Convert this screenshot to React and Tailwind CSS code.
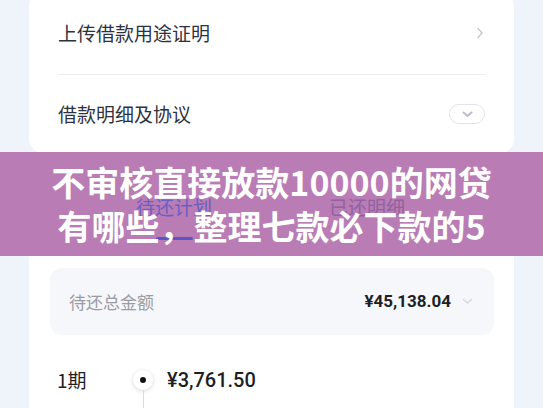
import React from "react";

const cjk = { fontFamily: '"Noto Sans CJK SC", "Noto Sans", sans-serif' };
const num = { fontFamily: 'Roboto, "Noto Sans", sans-serif' };

export default function App() {
  return (
    <div className="relative isolate w-[543px] h-[408px] overflow-hidden bg-[#eff3fa]" style={cjk}>
      <div className="flex flex-col px-[29px]">
        {/* Card 1 */}
        <div className="-mt-[8px] bg-white rounded-[14px] px-[29px]">
          <div className="h-[82px] flex items-center justify-between">
            <span className="text-[19px] text-[#2e3240]">上传借款用途证明</span>
            <svg width="8" height="12" viewBox="0 0 8 12" className="mr-[1px]">
              <polyline points="2,1.5 6,6 2,10.5" fill="none" stroke="#c4c7cf" strokeWidth="1.4" strokeLinecap="round" strokeLinejoin="round" />
            </svg>
          </div>
          <div className="h-px bg-[#eceef2]" />
          <div className="h-[78px] flex items-center justify-between">
            <span className="text-[19px] text-[#2e3240]">借款明细及协议</span>
            <div className="w-[36px] h-[20px] rounded-full border border-[#e2e4ec] flex items-center justify-center">
              <svg width="11" height="7" viewBox="0 0 11 7">
                <polyline points="1.5,1.5 5.5,5 9.5,1.5" fill="none" stroke="#b9bccb" strokeWidth="2" strokeLinecap="round" strokeLinejoin="round" />
              </svg>
            </div>
          </div>
        </div>

        {/* Card 2 */}
        <div className="mt-[12px] bg-white rounded-t-[14px] pt-[28px] h-[300px]">
          <div className="relative z-20 flex pl-[106px]">
            <div className="flex flex-col items-center w-[78px]">
              <span className="text-[19px] leading-[27px] text-[#6a60c2]">待还计划</span>
              <div className="mt-[17px] w-[37px] h-[3px] rounded-full bg-[#5a54c6]" />
            </div>
            <div className="ml-[116px]">
              <span className="text-[19px] leading-[27px] text-[#90629f]">已还明细</span>
            </div>
          </div>

          <div className="mt-[28px] mx-[20px] ml-[21px] h-[67px] rounded-[12px] bg-[#f6f7fa] pl-[19px] pr-[21px] flex items-center">
            <span className="text-[17px] text-[#9a9ca4]">待还总金额</span>
            <span className="ml-auto text-[17px] font-bold text-[#1d1f25]" style={num}>¥45,138.04</span>
            <svg width="11" height="7" viewBox="0 0 11 7" className="ml-[11px]">
              <polyline points="1.5,1.5 5.5,5 9.5,1.5" fill="none" stroke="#d3d5dc" strokeWidth="1.3" strokeLinecap="round" strokeLinejoin="round" />
            </svg>
          </div>

          <div className="mt-[31px] pl-[28px] flex items-center h-[28px]">
            <span className="w-[76px] text-[19px] text-[#1d1f25]">1期</span>
            <div className="relative w-[20px] h-[20px] rounded-full bg-white shadow-[0_1px_4px_rgba(90,100,140,0.25)] flex items-center justify-center">
              <div className="w-[6px] h-[6px] rounded-full bg-[#111]" />
              <div className="absolute left-[9.5px] top-[20px] w-px h-[40px] bg-[#d6dae4]" />
            </div>
            <span className="ml-[14px] text-[20px] font-medium text-[#1d1f25]" style={num}>¥3,761.50</span>
          </div>
          <div className="mt-[10px] pl-[28px] flex items-start text-[14px] text-[#a3a6ad]">
            <span className="w-[110px]">2024/04/16</span>
            <span className="w-[99px]">本金</span>
            <span>利息</span>
          </div>
        </div>
      </div>

      {/* Overlay band */}
      <div className="absolute left-0 right-0 top-[152px] h-[104px] bg-[#b97cb5] z-10" />
      <div className="absolute left-0 right-0 top-[152px] h-[104px] z-30 flex flex-col items-center justify-center text-white font-bold text-[34px] leading-[44px]" style={cjk}>
        <div>不审核直接放款10000的网贷</div>
        <div>有哪些，整理七款必下款的5</div>
      </div>
    </div>
  );
}
